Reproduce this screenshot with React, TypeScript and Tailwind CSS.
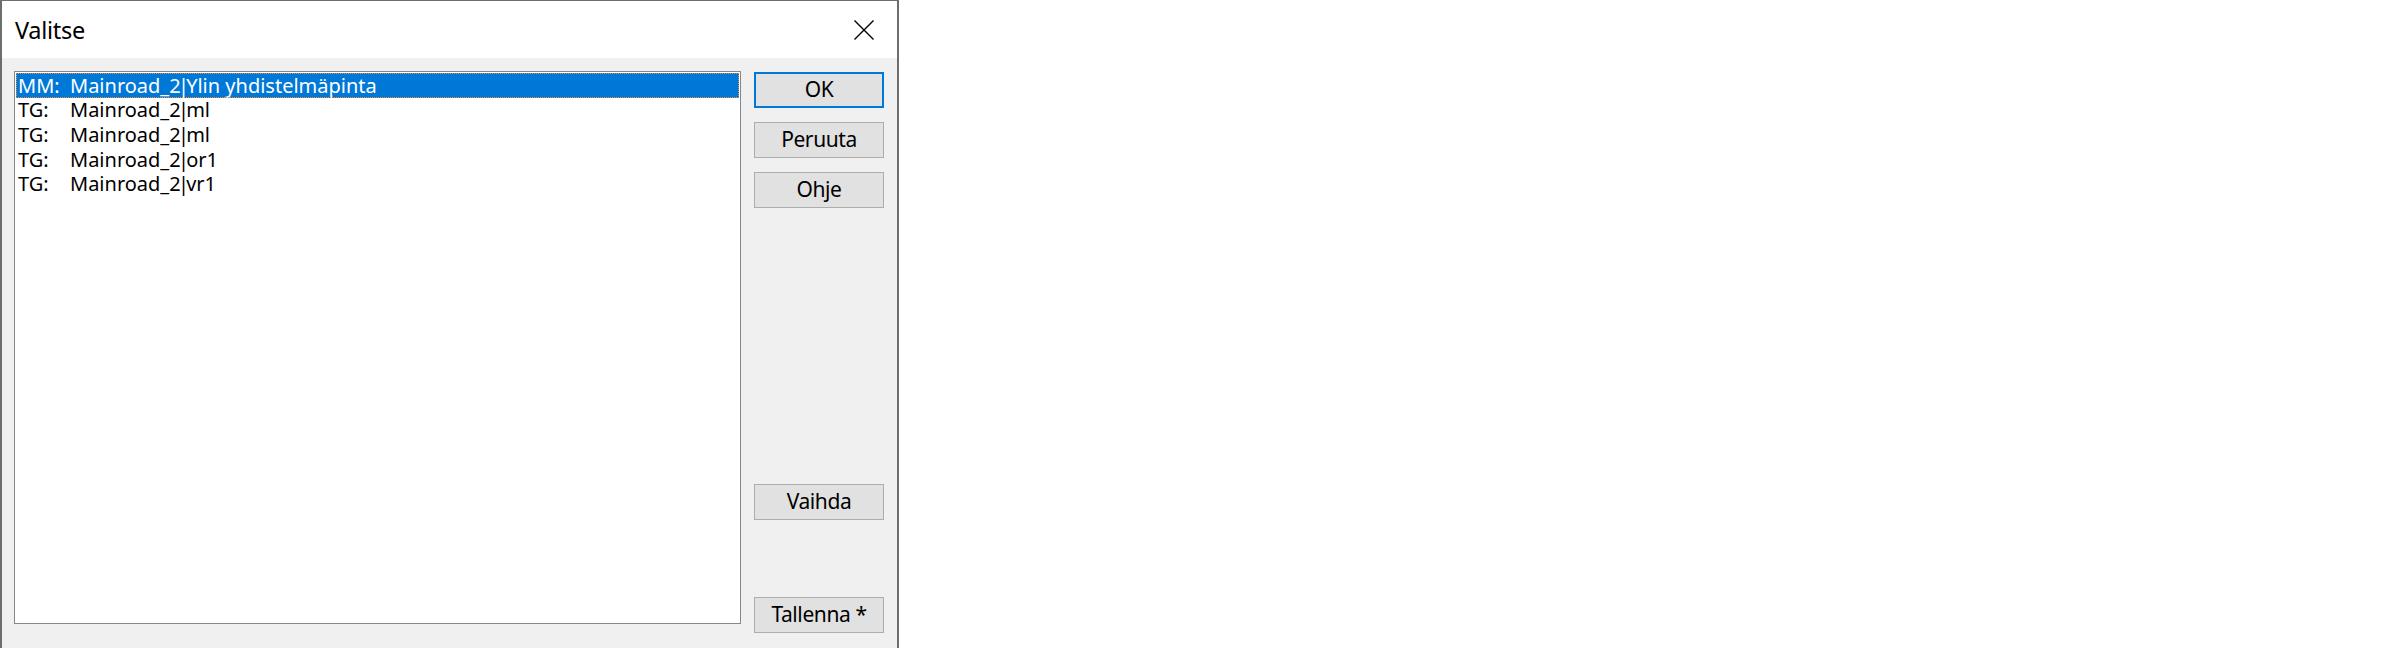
import React from "react";

const rows = [
  { p: "MM:", a: "Mainroad_2", b: "Ylin yhdistelmäpinta", sel: true },
  { p: "TG:", a: "Mainroad_2", b: "ml" },
  { p: "TG:", a: "Mainroad_2", b: "ml" },
  { p: "TG:", a: "Mainroad_2", b: "or1" },
  { p: "TG:", a: "Mainroad_2", b: "vr1" },
];

function Btn({ label, primary, className = "" }: { label: string; primary?: boolean; className?: string }) {
  return (
    <div
      className={
        "w-[130px] h-[36px] bg-[#e1e1e1] flex items-center justify-center text-[21px] tracking-[-0.4px] text-black " +
        (primary ? "border-2 border-[#0078d7] " : "border border-[#adadad] ") +
        className
      }
    >
      <span className="leading-none pb-[1px]">{label}</span>
    </div>
  );
}

export default function App() {
  return (
    <div className="w-[2400px] h-[648px] bg-white" style={{ fontFamily: '"Noto Sans", sans-serif' }}>
      <div className="w-[899px] h-[648px] border-2 border-t border-[#6d6d6d] flex flex-col">
        <div className="h-[57px] bg-white flex items-center justify-between shrink-0">
          <span className="pl-[13px] text-[23.5px] tracking-[-0.3px] leading-none pt-[2px] text-black">Valitse</span>
          <div className="w-[66px] h-[57px] flex items-center justify-center">
            <svg width="20" height="20" viewBox="0 0 20 20">
              <path d="M0.5 0.5 L19.5 19.5 M19.5 0.5 L0.5 19.5" stroke="#000" strokeWidth="1.4" fill="none" />
            </svg>
          </div>
        </div>
        <div className="flex-1 bg-[#f0f0f0] flex pt-[13px] pl-[12px] pr-[13px] pb-[22px] gap-[13px]">
          <div className="w-[727px] h-[553px] bg-white border border-[#828790] p-[1px]">
            {rows.map((r, i) => (
              <div
                key={i}
                className={
                  "h-[24.67px] flex items-center pl-[2px] pt-[1px] text-[20px] whitespace-nowrap " +
                  (r.sel ? "bg-[#0078d7] text-white outline-1 outline-dotted outline-[#ff8728] -outline-offset-1" : "text-black")
                }
              >
                <span className="w-[52px] shrink-0 leading-none">{r.p}</span>
                <span className="leading-none">
                  {r.a}
                  <span className="mx-[-2.8px]">|</span>
                  {r.b}
                </span>
              </div>
            ))}
          </div>
          <div className="flex flex-col pt-[1px]">
            <Btn label="OK" primary />
            <Btn label="Peruuta" className="mt-[14px]" />
            <Btn label="Ohje" className="mt-[14px]" />
            <Btn label="Vaihda" className="mt-[276px]" />
            <Btn label="Tallenna *" className="mt-[77px]" />
          </div>
        </div>
      </div>
    </div>
  );
}
